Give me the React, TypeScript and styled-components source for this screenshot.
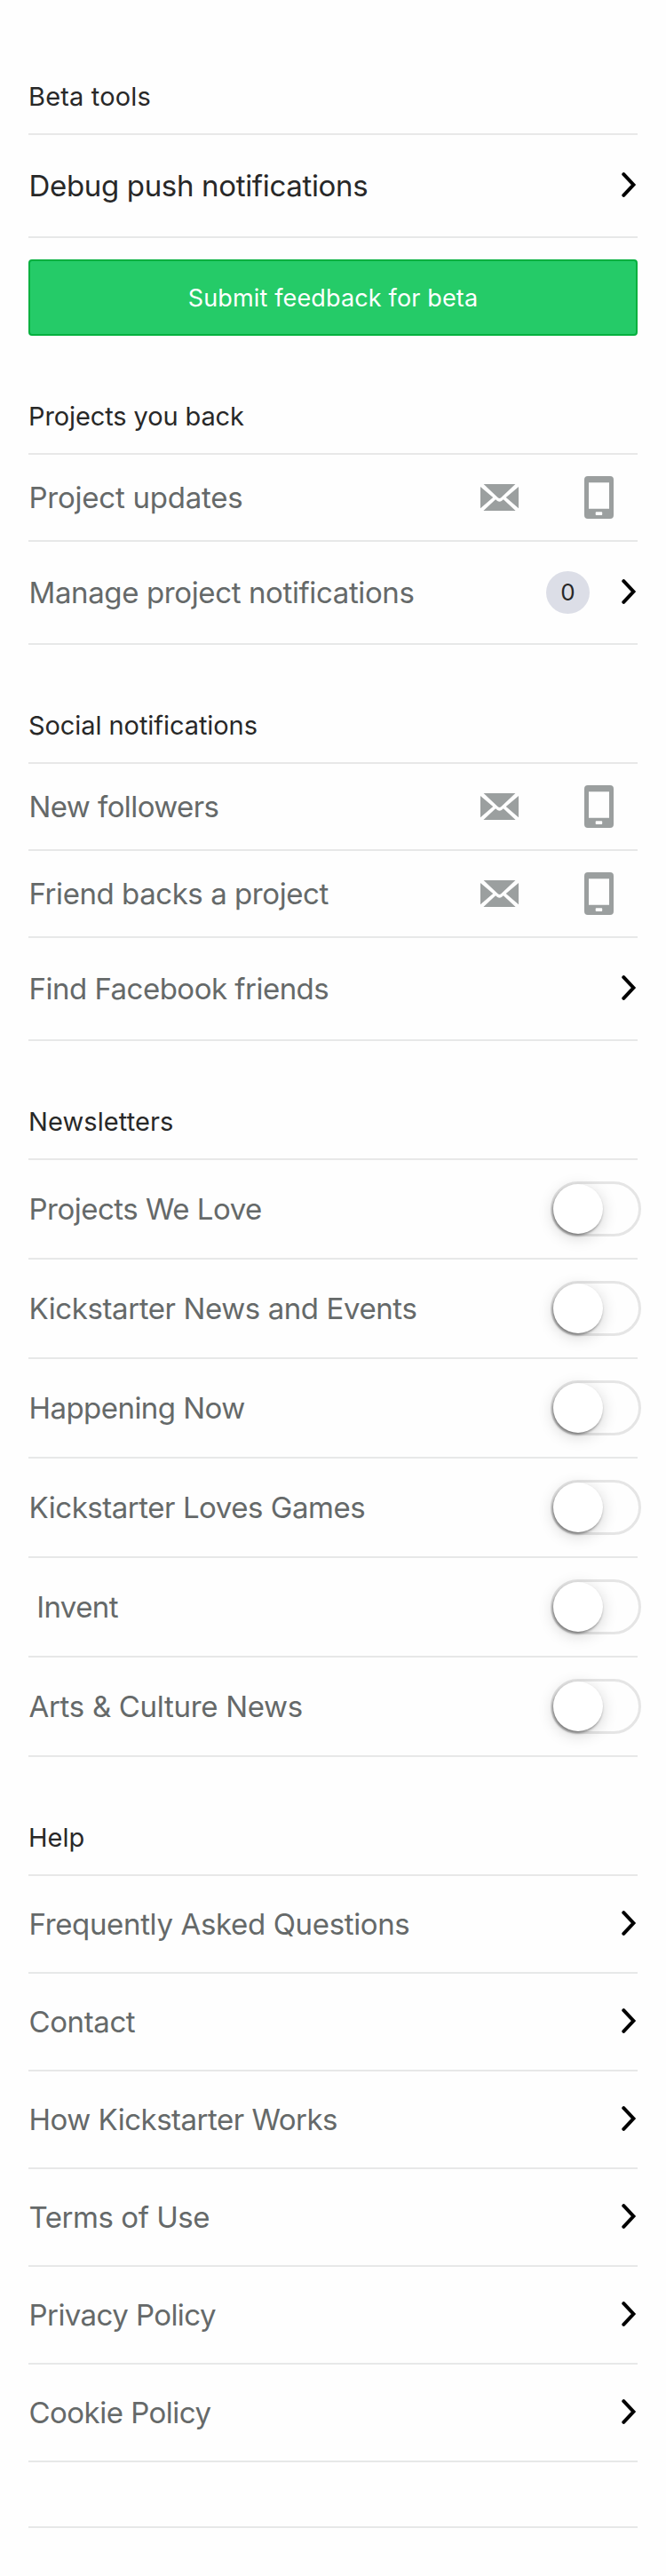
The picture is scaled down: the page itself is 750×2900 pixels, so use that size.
import React from 'react';
import styled, { createGlobalStyle } from 'styled-components';

const GlobalStyle = createGlobalStyle`
  body {
    margin: 0;
    background: #fefefe;
    font-family: Inter, "Liberation Sans", sans-serif;
  }
`;

const Page = styled.main`
  box-sizing: border-box;
  width: 750px;
  height: 2900px;
  padding: 18px 32px 0;
  background: #fefefe;
`;

const SectionTitle = styled.h2<{ $tracking: number }>`
  box-sizing: border-box;
  height: 134px;
  margin: 0;
  padding: 73px 0 0;
  border-bottom: 2px solid #e8e8e8;
  color: #282828;
  font-size: 29px;
  font-weight: 400;
  line-height: 36px;
  letter-spacing: ${(p) => p.$tracking}px;
  white-space: pre;
`;

const Row = styled.div<{ $height: number }>`
  box-sizing: border-box;
  display: flex;
  align-items: center;
  height: ${(p) => p.$height}px;
  border-bottom: 2px solid #e7e8e8;
`;

const Label = styled.span<{ $tracking: number; $dark?: boolean }>`
  flex: 1;
  padding-left: 0.5px;
  color: ${(p) => (p.$dark ? '#282828' : '#656969')};
  font-size: 33px;
  line-height: 40px;
  letter-spacing: ${(p) => p.$tracking}px;
  white-space: pre;
`;

const FeedbackButton = styled.button`
  box-sizing: border-box;
  display: block;
  width: 100%;
  height: 86px;
  margin: 24px 0 0;
  padding: 2px 0 0;
  border: 2px solid #05b03f;
  border-radius: 4px;
  background: #25cb68;
  color: #fff;
  font-family: inherit;
  font-size: 27px;
  line-height: 34px;
  letter-spacing: 0.15px;
`;

const ChannelIcons = styled.span`
  display: flex;
  align-items: center;
  gap: 74px;
  margin-right: 27px;
`;

const Badge = styled.span`
  display: flex;
  align-items: center;
  justify-content: center;
  width: 49px;
  height: 48px;
  margin-right: 36px;
  border-radius: 50%;
  background: #dcdee7;
  color: #282828;
  font-size: 26px;
  line-height: 32px;
`;

const ChevronIcon = styled.svg`
  display: block;
  margin-bottom: 2px;
`;

const Track = styled.span`
  box-sizing: border-box;
  width: 102px;
  height: 62px;
  margin-right: -4px;
  border: 3px solid #e5e5e5;
  border-radius: 31px;
`;

const Thumb = styled.span`
  display: block;
  width: 56px;
  height: 56px;
  border-radius: 50%;
  background: #fff;
  box-shadow: -1px 2px 3px rgba(0, 0, 0, 0.42), 0 4px 17px rgba(0, 0, 0, 0.17);
`;

const FooterSpace = styled.div`
  height: 72px;
  border-bottom: 2px solid #e7e8e8;
`;

const Chevron = () => (
  <ChevronIcon width="18" height="30" viewBox="0 0 18 30" fill="none" stroke="#000" strokeWidth="4">
    <path d="M2.3 3.2L13.4 15L2.3 26.8" strokeLinecap="round" strokeLinejoin="miter" />
  </ChevronIcon>
);

const MailIcon = () => (
  <svg width="43" height="30" viewBox="0 0 43 30" fill="#9b9f9f">
    <path d="M3.6 0H39.4L23.2 15.2Q21.5 16.7 19.8 15.2Z" />
    <path d="M0 2.9L14.2 15.1L0 27.2ZM43 2.9V27.2L28.8 15.1Z" />
    <path d="M3.4 30L17.1 17.2L19.2 18.9Q21.5 20.5 23.8 18.9L25.9 17.2L39.6 30Z" />
  </svg>
);

const PhoneIcon = () => (
  <svg width="33" height="48" viewBox="0 0 33 48" fill="#9b9f9f" fillRule="evenodd">
    <path d="M4 0H29Q33 0 33 4V44Q33 48 29 48H4Q0 48 0 44V4Q0 0 4 0ZM5 7.2V36.8H28V7.2ZM13.5 40.3Q12.7 40.3 12.7 41.1V43.2Q12.7 44 13.5 44H19.4Q20.2 44 20.2 43.2V41.1Q20.2 40.3 19.4 40.3Z" />
  </svg>
);

type Item = { label: string; tracking: number };

const ChannelRow = ({ label, tracking }: Item) => (
  <Row $height={98}>
    <Label $tracking={tracking}>{label}</Label>
    <ChannelIcons>
      <MailIcon />
      <PhoneIcon />
    </ChannelIcons>
  </Row>
);

type LinkProps = Item & { height?: number; dark?: boolean; count?: number };

const LinkRow = ({ label, tracking, height = 116, dark, count }: LinkProps) => (
  <Row $height={height}>
    <Label $tracking={tracking} $dark={dark}>{label}</Label>
    {count !== undefined && <Badge>{count}</Badge>}
    <Chevron />
  </Row>
);

const SwitchRow = ({ label, tracking }: Item) => (
  <Row $height={112}>
    <Label $tracking={tracking}>{label}</Label>
    <Track role="switch" aria-checked={false}>
      <Thumb />
    </Track>
  </Row>
);

const newsletters: Item[] = [
  { label: 'Projects We Love', tracking: -0.5 },
  { label: 'Kickstarter News and Events', tracking: -0.41 },
  { label: 'Happening Now', tracking: -0.55 },
  { label: 'Kickstarter Loves Games', tracking: -0.46 },
  { label: ' Invent', tracking: -0.6 },
  { label: 'Arts & Culture News', tracking: -0.3 },
];

const helpLinks: Item[] = [
  { label: 'Frequently Asked Questions', tracking: -0.35 },
  { label: 'Contact', tracking: -0.4 },
  { label: 'How Kickstarter Works', tracking: -0.5 },
  { label: 'Terms of Use', tracking: -0.45 },
  { label: 'Privacy Policy', tracking: -0.57 },
  { label: 'Cookie Policy', tracking: -0.52 },
];

export default function App() {
  return (
    <>
      <GlobalStyle />
      <Page>
        <section>
          <SectionTitle $tracking={0.17}>Beta tools</SectionTitle>
          <LinkRow label="Debug push notifications" tracking={-0.33} dark />
          <FeedbackButton type="button">Submit feedback for beta</FeedbackButton>
        </section>
        <section>
          <SectionTitle $tracking={-0.11}>Projects you back</SectionTitle>
          <ChannelRow label="Project updates" tracking={-0.23} />
          <LinkRow label="Manage project notifications" tracking={-0.38} count={0} />
        </section>
        <section>
          <SectionTitle $tracking={-0.07}>Social notifications</SectionTitle>
          <ChannelRow label="New followers" tracking={-0.58} />
          <ChannelRow label="Friend backs a project" tracking={-0.44} />
          <LinkRow label="Find Facebook friends" tracking={-0.51} />
        </section>
        <section>
          <SectionTitle $tracking={0.1}>Newsletters</SectionTitle>
          {newsletters.map((item) => (
            <SwitchRow key={item.label} {...item} />
          ))}
        </section>
        <section>
          <SectionTitle $tracking={0}>Help</SectionTitle>
          {helpLinks.map((item) => (
            <LinkRow key={item.label} {...item} height={110} />
          ))}
        </section>
        <FooterSpace />
      </Page>
    </>
  );
}
